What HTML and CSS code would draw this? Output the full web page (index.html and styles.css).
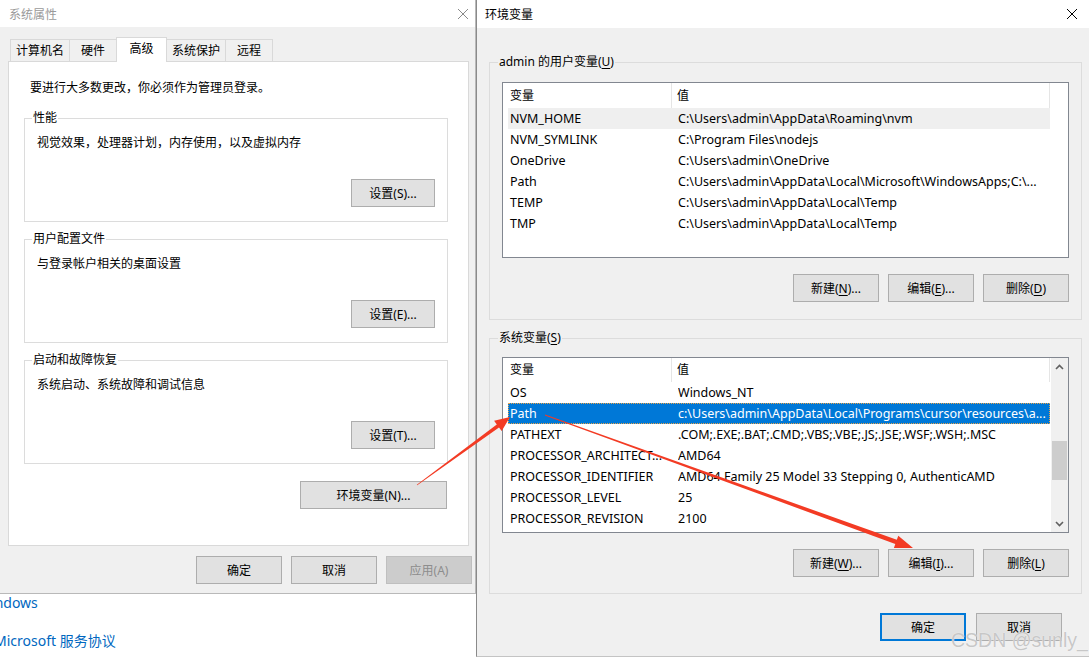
FILE: index.html
```html
<!DOCTYPE html>
<html lang="zh-CN">
  <head>
    <meta charset="UTF-8" />
    <meta name="viewport" content="width=device-width, initial-scale=1.0" />
    <title>环境变量</title>
    <link rel="stylesheet" href="styles.css">
  </head>
  <body>
    <div class="bg-links">
      <a class="bg-link first">Windows</a>
      <a class="bg-link second">Microsoft 服务协议</a>
    </div>

    <div class="window sys-props">
      <div class="titlebar">
        <span class="title">系统属性</span>
        <svg class="close" width="12" height="12" viewBox="0 0 12 12">
          <path d="M1 1L11 11M11 1L1 11" />
        </svg>
      </div>
      <div class="body">
        <div class="tabs">
          <div class="tab">计算机名</div>
          <div class="tab">硬件</div>
          <div class="tab active">高级</div>
          <div class="tab">系统保护</div>
          <div class="tab">远程</div>
        </div>
        <div class="panel">
          <p class="notice">要进行大多数更改，你必须作为管理员登录。</p>

          <fieldset class="group">
            <legend>性能</legend>
            <p>视觉效果，处理器计划，内存使用，以及虚拟内存</p>
            <div class="actions"><button class="btn">设置(S)...</button></div>
          </fieldset>

          <fieldset class="group">
            <legend>用户配置文件</legend>
            <p>与登录帐户相关的桌面设置</p>
            <div class="actions"><button class="btn">设置(E)...</button></div>
          </fieldset>

          <fieldset class="group">
            <legend>启动和故障恢复</legend>
            <p>系统启动、系统故障和调试信息</p>
            <div class="actions"><button class="btn">设置(T)...</button></div>
          </fieldset>

          <div class="env-row">
            <button class="btn btn-env">环境变量(N)...</button>
          </div>
        </div>
        <div class="footer">
          <button class="btn">确定</button>
          <button class="btn">取消</button>
          <button class="btn" disabled>应用(A)</button>
        </div>
      </div>
    </div>

    <div class="window env-vars">
      <div class="titlebar">
        <span class="title">环境变量</span>
        <svg class="close" width="12" height="12" viewBox="0 0 12 12">
          <path d="M1 1L11 11M11 1L1 11" />
        </svg>
      </div>
      <div class="body">
        <fieldset class="group">
          <legend>admin 的用户变量(<u>U</u>)</legend>
          <div class="list">
            <div class="list-main no-scroll">
              <div class="list-head">
                <div class="col-name">变量</div>
                <div class="col-value">值</div>
              </div>
              <div class="row hover"><span class="cell-name">NVM_HOME</span><span class="cell-value">C:\Users\admin\AppData\Roaming\nvm</span></div>
              <div class="row"><span class="cell-name">NVM_SYMLINK</span><span class="cell-value">C:\Program Files\nodejs</span></div>
              <div class="row"><span class="cell-name">OneDrive</span><span class="cell-value">C:\Users\admin\OneDrive</span></div>
              <div class="row"><span class="cell-name">Path</span><span class="cell-value">C:\Users\admin\AppData\Local\Microsoft\WindowsApps;C:\...</span></div>
              <div class="row"><span class="cell-name">TEMP</span><span class="cell-value">C:\Users\admin\AppData\Local\Temp</span></div>
              <div class="row"><span class="cell-name">TMP</span><span class="cell-value">C:\Users\admin\AppData\Local\Temp</span></div>
            </div>
          </div>
          <div class="actions">
            <button class="btn">新建(<u>N</u>)...</button>
            <button class="btn">编辑(<u>E</u>)...</button>
            <button class="btn">删除(<u>D</u>)</button>
          </div>
        </fieldset>

        <fieldset class="group system">
          <legend>系统变量(<u>S</u>)</legend>
          <div class="list">
            <div class="list-main">
              <div class="list-head">
                <div class="col-name">变量</div>
                <div class="col-value">值</div>
              </div>
              <div class="row"><span class="cell-name">OS</span><span class="cell-value">Windows_NT</span></div>
              <div class="row selected"><span class="cell-name">Path</span><span class="cell-value">c:\Users\admin\AppData\Local\Programs\cursor\resources\a...</span></div>
              <div class="row"><span class="cell-name">PATHEXT</span><span class="cell-value">.COM;.EXE;.BAT;.CMD;.VBS;.VBE;.JS;.JSE;.WSF;.WSH;.MSC</span></div>
              <div class="row"><span class="cell-name">PROCESSOR_ARCHITECT...</span><span class="cell-value">AMD64</span></div>
              <div class="row"><span class="cell-name">PROCESSOR_IDENTIFIER</span><span class="cell-value">AMD64 Family 25 Model 33 Stepping 0, AuthenticAMD</span></div>
              <div class="row"><span class="cell-name">PROCESSOR_LEVEL</span><span class="cell-value">25</span></div>
              <div class="row"><span class="cell-name">PROCESSOR_REVISION</span><span class="cell-value">2100</span></div>
            </div>
            <div class="scrollbar">
              <div class="sb-btn">
                <svg width="9" height="6" viewBox="0 0 9 6"><path d="M1 5L4.5 1.5L8 5" /></svg>
              </div>
              <div class="sb-track"><div class="sb-thumb"></div></div>
              <div class="sb-btn">
                <svg width="9" height="6" viewBox="0 0 9 6"><path d="M1 1L4.5 4.5L8 1" /></svg>
              </div>
            </div>
          </div>
          <div class="actions">
            <button class="btn">新建(<u>W</u>)...</button>
            <button class="btn">编辑(<u>I</u>)...</button>
            <button class="btn">删除(<u>L</u>)</button>
          </div>
        </fieldset>

        <div class="footer">
          <button class="btn btn-default">确定</button>
          <button class="btn">取消</button>
        </div>
      </div>
    </div>

    <svg class="annot" width="1089" height="660" viewBox="0 0 1089 660">
      <polygon points="416.8,484.7 496.8,424.4 494.1,420.7 510,417 501.7,431.1 499,427.4 417.2,485.3" />
      <polygon points="545.1,414.6 896.8,539.8 898.3,535.8 913,548 893.9,548 895.3,544 544.9,415.4" />
    </svg>

    <div class="watermark">CSDN @sunly_</div>
  </body>
</html>
```

FILE: styles.css
```css
* {
  margin: 0;
  padding: 0;
  box-sizing: border-box;
}

body {
  width: 1089px;
  height: 660px;
  overflow: hidden;
  position: relative;
  background-color: #fff;
  font-family: "Noto Sans", "Noto Sans CJK SC", sans-serif;
  font-size: 12px;
  color: #000;
}

u {
  text-decoration: underline;
  text-underline-offset: 2px;
}

/* background window links */
.bg-links {
  position: absolute;
  left: -3px;
  top: 593px;
}

.bg-link {
  display: block;
  font-size: 14px;
  line-height: 20px;
  color: #0067c0;
  white-space: nowrap;
}

.bg-link.first {
  margin-left: -19px;
  margin-bottom: 18px;
}

.bg-link.second {
  margin-left: -3px;
}

/* windows */
.window {
  position: absolute;
  top: 0;
  display: flex;
  flex-direction: column;
}

.titlebar {
  height: 28px;
  background-color: #fff;
  display: flex;
  align-items: center;
  justify-content: space-between;
  flex-shrink: 0;
}

.close path {
  stroke: #000;
  stroke-width: 1;
  fill: none;
}

.body {
  flex: 1;
  background-color: #f0f0f0;
}

.sys-props {
  left: 0;
  width: 476px;
  height: 594px;
  border-right: 1px solid #b9b9b9;
  border-bottom: 1px solid #b9b9b9;
}

.sys-props .titlebar {
  height: 27px;
  padding: 0 6px 0 9px;
}

.sys-props .title {
  color: #9a9a9a;
}

.sys-props .close path {
  stroke: #8a8a8a;
}

.sys-props .body {
  padding: 10px 6px 0 8px;
}

.env-vars {
  left: 476px;
  width: 618px;
  height: 657px;
  border-left: 1px solid #8a8a8a;
  border-bottom: 1px solid #c4c4c4;
}

.env-vars .titlebar {
  padding: 0 16px 0 8px;
}

.env-vars .body {
  padding: 26px 12px 0 12px;
}

/* tabs */
.tabs {
  display: flex;
  align-items: flex-end;
  height: 24px;
  padding-left: 2px;
}

.tab {
  height: 22px;
  line-height: 21px;
  min-width: 48px;
  padding: 0 5px;
  text-align: center;
  border: 1px solid #d9d9d9;
  border-bottom: none;
  background-color: #f0f0f0;
  margin-left: -1px;
}

.tab:first-child {
  margin-left: 0;
}

.tab.active {
  position: relative;
  z-index: 2;
  height: 25px;
  line-height: 22px;
  min-width: 51px;
  margin-bottom: -1px;
  background-color: #fff;
}

.panel {
  height: 485px;
  background-color: #fff;
  border: 1px solid #d9d9d9;
  padding: 18px 20px 0 15px;
}

.notice {
  line-height: 16px;
  margin: 0 0 14px 6px;
}

/* group boxes */
.group {
  border: 1px solid #dcdcdc;
  padding: 9px 12px 14px;
  margin-bottom: 9px;
  min-width: 0;
}

.group legend {
  line-height: 16px;
  padding: 0 1px;
  margin-left: -5px;
}

.group p {
  line-height: 16px;
}

.actions {
  display: flex;
  justify-content: flex-end;
  gap: 10px;
  margin-top: 28px;
}

.env-row {
  display: flex;
  justify-content: flex-end;
  margin-top: 17px;
  padding-right: 1px;
}

.footer {
  display: flex;
  justify-content: flex-end;
  gap: 9px;
  margin: 10px -3px 0 0;
}

/* buttons */
.btn {
  height: 28px;
  width: 84px;
  border: 1px solid #adadad;
  background-color: #e1e1e1;
  font-family: inherit;
  font-size: 12px;
  color: #000;
}

.btn-env {
  width: 147px;
}

.footer .btn {
  width: 86px;
  height: 28px;
}

.btn:disabled {
  background-color: #cccccc;
  border-color: #bfbfbf;
  color: #8d8d8d;
}

.btn-default {
  border: 2px solid #0078d7;
}

.env-vars .group {
  padding: 12px 12px 17px;
  margin-bottom: 0;
}

.env-vars .group legend {
  margin-left: -4px;
}

.env-vars .group.system {
  margin-top: 10px;
  padding-top: 11px;
  padding-bottom: 16px;
}

.env-vars .actions {
  margin-top: 16px;
  gap: 9px;
}

.env-vars .actions .btn {
  width: 86px;
}

.env-vars .footer {
  margin: 19px 20px 0 0;
  gap: 10px;
}

.env-vars .footer .btn {
  width: 86px;
}

/* list view */
.list {
  height: 176px;
  border: 1px solid #828790;
  background-color: #fff;
  display: flex;
}

.list-main {
  flex: 1;
  min-width: 0;
  padding: 0 1px 0 5px;
}

.list-main.no-scroll {
  padding-right: 18px;
}

.list-head {
  display: flex;
  height: 25px;
  line-height: 25px;
}

.system .list-head {
  height: 24px;
  line-height: 24px;
}

.col-name {
  width: 164px;
  padding-left: 2px;
  border-right: 1px solid #e5e5e5;
}

.col-value {
  flex: 1;
  padding-left: 5px;
  border-right: 1px solid #e5e5e5;
}

.row {
  display: flex;
  height: 21px;
  line-height: 21px;
  font-size: 12.5px;
  white-space: nowrap;
}

.row.hover {
  background-color: #efefef;
}

.row.selected {
  background-color: #0078d7;
  color: #fff;
  outline: 1px dotted #e8a34a;
  outline-offset: -1px;
}

.cell-name {
  width: 170px;
  padding-left: 2px;
  overflow: hidden;
  flex-shrink: 0;
}

.cell-value {
  flex: 1;
  overflow: hidden;
}

.scrollbar {
  width: 17px;
  background-color: #f0f0f0;
  display: flex;
  flex-direction: column;
}

.sb-btn {
  height: 17px;
  display: flex;
  align-items: center;
  justify-content: center;
}

.sb-btn path {
  stroke: #606060;
  stroke-width: 1.6;
  fill: none;
}

.sb-track {
  flex: 1;
}

.sb-thumb {
  margin: 66px 1px 0;
  height: 39px;
  background-color: #cdcdcd;
}

/* annotations */
.annot {
  position: absolute;
  left: 0;
  top: 0;
  z-index: 10;
  pointer-events: none;
}

.annot polygon {
  fill: #f33b24;
}

.watermark {
  position: absolute;
  left: 951px;
  top: 628px;
  z-index: 11;
  font-family: "Liberation Sans", Arial, sans-serif;
  font-size: 19.5px;
  line-height: 24px;
  color: rgba(185, 185, 185, 0.8);
  text-shadow: 0 0 1px #fff;
}
```
